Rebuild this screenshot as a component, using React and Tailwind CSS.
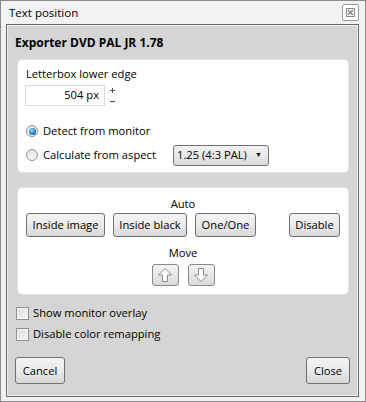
import React from 'react'

const Btn = ({ children, className = '' }) => (
  <button className={`h-[24px] px-[4px] border border-[#707070] rounded-[3px] bg-gradient-to-b from-[#f3f3f3] via-[#ebebeb] to-[#d8d8d8] text-[11.2px] text-black leading-none whitespace-nowrap ${className}`}>
    {children}
  </button>
)

const Radio = ({ checked }) => (
  <span className="w-[12px] h-[12px] rounded-full border border-[#8e8f8f] bg-gradient-to-b from-[#e8e8e8] to-[#f8f8f8] flex items-center justify-center">
    {checked && <span className="w-[7px] h-[7px] rounded-full bg-[radial-gradient(circle_at_40%_35%,#9ad9f7,#1b78bf_60%,#0d4a86)]" />}
  </span>
)

const Check = () => (
  <span className="w-[13px] h-[13px] border border-[#8f8f8f] bg-gradient-to-br from-[#dcdcdc] to-[#f6f6f6] shadow-[inset_0_0_0_1px_#f4f4f4]" />
)

const Arrow = ({ down }) => (
  <svg width="16" height="16" viewBox="0 0 16 16" className={down ? 'rotate-180' : ''}>
    <polygon points="8,1.5 14.5,8 10.5,8 10.5,14.5 5.5,14.5 5.5,8 1.5,8" fill="#fff" stroke="#8a8a8a" strokeWidth="1" />
  </svg>
)

const Spinner = () => (
  <svg width="7" height="20" viewBox="0 0 7 20">
    <path d="M1 5.5 H6 M3.5 3 V8" stroke="#555" strokeWidth="1" />
    <path d="M1 16.5 H6" stroke="#555" strokeWidth="1.2" />
  </svg>
)

const App = () => {
  return (
    <div className="w-[366px] h-[402px] border border-[#8a8a8a] bg-[#f2f2f2] flex flex-col font-['Open_Sans',sans-serif] text-[11.2px] text-black">
      <div className="h-[23px] flex items-center justify-between pl-[8px] pr-[6px] shrink-0">
        <span className="text-[11.5px] leading-none">Text position</span>
        <span className="w-[17px] h-[17px] border border-[#9a9a9a] rounded-[2px] bg-white flex items-center justify-center">
          <svg width="9" height="9" viewBox="0 0 9 9">
            <rect x="0.5" y="0.5" width="8" height="8" fill="none" stroke="#8a8a8a" />
            <path d="M2 2 L7 7 M7 2 L2 7" stroke="#777" strokeWidth="1.2" />
          </svg>
        </span>
      </div>

      <div className="ml-[5px] mr-[6px] mb-[4px] flex-1 border border-[#6a6a6a] bg-[#d5d5d5] shadow-[inset_0_0_0_1px_#f0f0f0] px-[8px] flex flex-col">
        <div className="pt-[9px] h-[26px] font-bold text-[12px] leading-[17px] whitespace-nowrap">Exporter DVD PAL JR 1.78</div>

        <div className="mt-[8px] ml-[2px] mr-[1px] h-[114px] bg-white rounded-[5px] border border-[#e4e4e4] pl-[8px] flex flex-col">
          <div className="pt-[5px] h-[23px] leading-[18px]">Letterbox lower edge</div>
          <div className="mt-[2px] flex items-center">
            <div className="ml-[-1px] w-[80px] h-[21px] border border-[#d6dbe3] flex items-center justify-end pr-[5px]">504 px</div>
            <div className="ml-[4px] mt-[-1px]"><Spinner /></div>
          </div>
          <div className="mt-[15px] h-[20px] flex items-center gap-[5px]">
            <Radio checked />
            <span>Detect from monitor</span>
          </div>
          <div className="mt-[3px] h-[22px] flex items-center">
            <Radio />
            <span className="ml-[5px] w-[130px]">Calculate from aspect</span>
            <div className="w-[96px] h-[21px] border border-[#707070] rounded-[3px] bg-gradient-to-b from-[#f3f3f3] to-[#dcdcdc] flex items-center justify-between pl-[3px] pr-[6px]">
              <span>1.25 (4:3 PAL)</span>
              <span className="text-[7px]">▼</span>
            </div>
          </div>
        </div>

        <div className="mt-[14px] ml-[2px] mr-[1px] h-[108px] bg-white rounded-[5px] border border-[#e4e4e4] px-[8px] flex flex-col">
          <div className="pt-[7px] h-[25px] leading-[18px] text-center">Auto</div>
          <div className="flex items-center gap-[8px]">
            <Btn className="w-[79px]">Inside image</Btn>
            <Btn className="w-[74px]">Inside black</Btn>
            <Btn className="w-[61px]">One/One</Btn>
            <Btn className="ml-auto w-[51px]">Disable</Btn>
          </div>
          <div className="mt-[7px] h-[18px] leading-[18px] text-center">Move</div>
          <div className="mt-[2px] flex justify-center gap-[9px]">
            <button className="w-[27px] h-[22px] border border-[#8a8a8a] rounded-[3px] bg-gradient-to-b from-[#f3f3f3] to-[#dadada] flex items-center justify-center"><Arrow /></button>
            <button className="w-[27px] h-[22px] border border-[#8a8a8a] rounded-[3px] bg-gradient-to-b from-[#f3f3f3] to-[#dadada] flex items-center justify-center"><Arrow down /></button>
          </div>
        </div>

        <div className="mt-[8px] h-[21px] flex items-center gap-[4px] pl-[1px]">
          <Check />
          <span>Show monitor overlay</span>
        </div>
        <div className="h-[21px] flex items-center gap-[4px] pl-[1px]">
          <Check />
          <span>Disable color remapping</span>
        </div>

        <div className="mt-[12px] flex justify-between">
          <Btn className="w-[50px] h-[27px]">Cancel</Btn>
          <Btn className="w-[44px] h-[27px]">Close</Btn>
        </div>
      </div>
    </div>
  )
}

export default App
